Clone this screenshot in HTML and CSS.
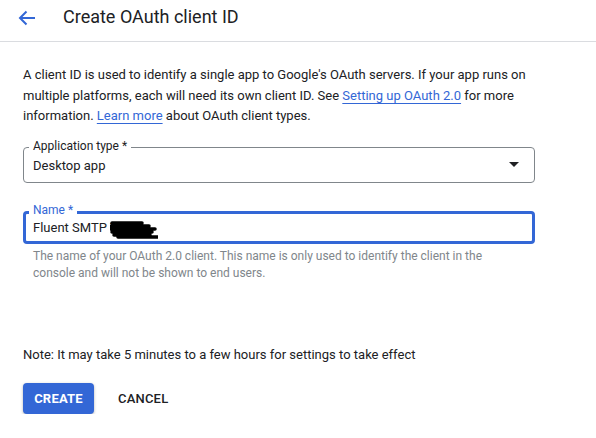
FILE: index.html
```html
<!DOCTYPE html>
<html>
<head>
<meta charset="utf-8">
<link rel="stylesheet" href="styles.css">
</head>
<body>
<header class="topbar">
  <svg class="back" width="18" height="16" viewBox="0 0 18 16"><path d="M17 8H2.5M8.5 1.5L2 8l6.5 6.5" fill="none" stroke="#3367d6" stroke-width="2"/></svg>
  <h1 class="title">Create OAuth client ID</h1>
</header>
<main class="content">
  <p class="intro">A client ID is used to identify a single app to Google's OAuth servers. If your app runs on multiple platforms, each will need its own client ID. See <a href="#">Setting up OAuth 2.0</a> for more information. <a href="#">Learn more</a> about OAuth client types.</p>

  <div class="field select">
    <span class="label">Application type *</span>
    <span class="value">Desktop app</span>
    <span class="caret"></span>
  </div>

  <div class="field focused">
    <span class="label">Name *</span>
    <span class="value">Fluent SMTP T<svg class="redact" width="48" height="20" viewBox="0 0 48 20"><path d="M2 4h30M1 7h38M1 10h44M2 13h40M4 16h36M8 18h40" stroke="#000" stroke-width="3.5" fill="none" stroke-linecap="round"/></svg></span>
  </div>
  <p class="hint">The name of your OAuth 2.0 client. This name is only used to identify the client in the console and will not be shown to end users.</p>

  <p class="note">Note: It may take 5 minutes to a few hours for settings to take effect</p>

  <div class="actions">
    <button class="btn primary">CREATE</button>
    <button class="btn flat">CANCEL</button>
  </div>
</main>
</body>
</html>
```

FILE: styles.css
```css
* { box-sizing: border-box; }
body {
  margin: 0;
  font-family: Roboto, "Liberation Sans", Arial, sans-serif;
  color: #202124;
  background: #fff;
}
.topbar {
  height: 42px;
  border-bottom: 1px solid #dadce0;
  display: flex;
  align-items: center;
  padding: 0 0 2px 18px;
}
.back { display: block; margin-top: -3px; }
.title {
  margin: 0 0 0 27px;
  font-size: 18px;
  font-weight: 400;
  line-height: 24px;
  margin-top: -6px;
}
.content {
  padding: 0 23px;
}
.intro {
  margin: 23px 0 0;
  font-size: 13px;
  line-height: 20.5px;
  max-width: 512px;
}
.intro a {
  color: #3367d6;
  text-decoration: underline;
  text-underline-offset: 3px;
}
.field {
  position: relative;
  width: 512px;
  border: 1px solid #80868b;
  border-radius: 4px;
  display: flex;
  align-items: center;
  padding: 0 9px;
}
.select {
  margin-top: 20px;
  height: 36px;
}
.focused {
  margin-top: 28px;
  height: 33px;
  border: 3px solid #3367d6;
  padding: 0 7px;
}
.label {
  position: absolute;
  left: 5px;
  top: -9px;
  background: #fff;
  padding: 0 4px;
  font-size: 12px;
  line-height: 14px;
  color: #202124;
}
.focused .label {
  color: #3367d6;
  left: 3px;
  top: -11px;
}
.value {
  font-size: 13px;
  display: flex;
  align-items: center;
  margin-top: 1px;
}
.redact { margin-left: -8px; margin-top: 2px; }
.caret {
  margin-left: auto;
  margin-right: 6px;
  width: 0; height: 0;
  border-left: 5px solid transparent;
  border-right: 5px solid transparent;
  border-top: 5px solid #202124;
}
.hint {
  margin: 4px 0 0 10px;
  font-size: 12px;
  line-height: 17px;
  color: #80868b;
  max-width: 470px;
}
.note {
  margin: 64px 0 0;
  font-size: 13px;
  line-height: 18px;
}
.actions {
  display: flex;
  align-items: center;
  gap: 24px;
  margin-top: 19px;
}
.btn {
  font-family: inherit;
  font-size: 13px;
  border: none;
  cursor: pointer;
  letter-spacing: 0.2px;
}
.primary {
  width: 71px;
  height: 31px;
  background: #3367d6;
  color: #fff;
  font-weight: 700;
  border-radius: 4px;
  box-shadow: 0 1px 3px rgba(0,0,0,0.3);
}
.flat {
  background: none;
  color: #202124;
  font-weight: 500;
  padding: 0;
}
```
